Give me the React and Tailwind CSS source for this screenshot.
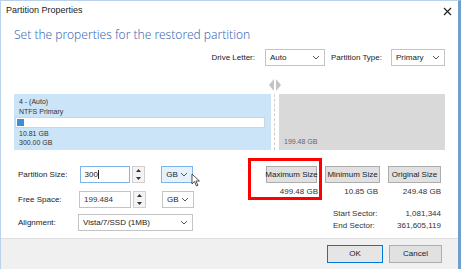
import React from 'react';

const font = { fontFamily: '"Liberation Sans", Arial, sans-serif' };

const Chevron = () => (
    <svg width="8" height="5" viewBox="0 0 8 5" className="shrink-0">
        <polyline points="1,1 4,4 7,1" fill="none" stroke="#555" strokeWidth="1" />
    </svg>
);

const Select = ({ value, className = '', focused = false }) => (
    <div
        className={`flex items-center justify-between border pl-[4px] pr-[4px] h-[17px] text-[8px] text-[#222] whitespace-nowrap ${
            focused ? 'bg-[#e5f1fb] border-[#7eb4ea]' : 'bg-white border-[#c4c4c4]'
        } ${className}`}
    >
        <span>{value}</span>
        <Chevron />
    </div>
);

const Spinner = () => (
    <div className="flex flex-col justify-center gap-[1px] w-[13px] h-[17px] ml-[2px] border border-[#d0d0d0] bg-[#f4f4f4]">
        <svg width="11" height="7" viewBox="0 0 11 7">
            <polygon points="3,5 8,5 5.5,2" fill="#333" />
        </svg>
        <svg width="11" height="7" viewBox="0 0 11 7">
            <polygon points="3,2 8,2 5.5,5" fill="#333" />
        </svg>
    </div>
);

const Btn = ({ children, className = '' }) => (
    <div className={`flex items-center justify-center border whitespace-nowrap text-[8px] text-[#222] ${className}`}>
        {children}
    </div>
);

export default function App() {
    return (
        <div style={font} className="w-[461px] h-[269px] bg-white flex flex-col border-l border-t border-[#b9d1ea] border-r-[3px] border-r-[#6f9fd0] overflow-hidden relative">
            {/* title bar */}
            <div className="h-[20px] flex items-center justify-between pl-[5px] pr-[6px] text-[9px] text-[#222]">
                <span>Partition Properties</span>
                <svg width="9" height="9" viewBox="0 0 9 9">
                    <path d="M1 1 L8 8 M8 1 L1 8" stroke="#222" strokeWidth="1.2" />
                </svg>
            </div>

            <div
                style={{ fontFamily: '"Noto Sans", "Open Sans", sans-serif' }}
                className="pl-[13px] pt-[6px] h-[22px] text-[12px] leading-[16px] font-light text-[#3e6db5]"
            >
                Set the properties for the restored partition
            </div>

            {/* drive letter row */}
            <div className="flex items-center justify-end pr-[13px] mt-[6px] h-[17px] text-[8px] text-[#222]">
                <span>Drive Letter:</span>
                <Select value="Auto" className="w-[60px] ml-[10px]" />
                <span className="ml-[6px]">Partition Type:</span>
                <Select value="Primary" className="w-[54px] ml-[9px]" />
            </div>

            {/* partition map */}
            <div className="flex mt-[13px] ml-[13px] h-[71px] items-end">
                <div className="w-[257px] h-[56px] bg-[#cce4f7] flex flex-col pl-[5px] pr-[6px] pt-[3px] text-[7px] text-[#333] leading-[10px]">
                    <span>4 - (Auto)</span>
                    <span>NTFS Primary</span>
                    <div className="h-[11px] bg-white border border-[#c6d6e6] -ml-[4px] flex items-stretch p-[1px]">
                        <div className="w-[7px] bg-[#3b8ed8]" />
                    </div>
                    <span className="mt-[1px] leading-[9px]">10.81 GB</span>
                    <span className="leading-[9px]">300.00 GB</span>
                </div>
                <div className="w-[8px] h-[71px] flex flex-col items-center">
                    <svg width="14" height="12" viewBox="0 0 14 12" className="-mx-[3px]">
                        <polygon points="6,0 6,12 1,6" fill="#c4c4c4" />
                        <polygon points="8,0 8,12 13,6" fill="#c4c4c4" />
                    </svg>
                    <div className="flex-1 w-[2px] border-l border-dashed border-[#cfcfcf] mt-[3px]" />
                </div>
                <div className="w-[166px] h-[56px] bg-[#d9d9d9] flex items-end pl-[5px] pb-[3px] text-[7px] text-[#666]">
                    199.48 GB
                </div>
            </div>

            {/* controls */}
            <div className="flex mt-[16px] h-[66px]">
                <div className="w-[200px] pl-[17px] flex flex-col text-[8px] text-[#222]">
                    <div className="flex items-center h-[17px]">
                        <span className="w-[62px]">Partition Size:</span>
                        <div className="w-[51px] h-[17px] border border-[#7eb4ea] bg-white flex items-center pl-[4px]">
                            300<span className="w-[1px] h-[9px] bg-[#222]" />
                        </div>
                        <Spinner />
                        <Select value="GB" focused className="w-[32px] ml-[16px]" />
                        <svg width="10" height="14" viewBox="0 0 10 14" className="-ml-[2px] mt-[10px]">
                            <path d="M1 1 L1 11 L3.5 8.5 L5.5 13 L7 12.3 L5 8 L8.5 8 Z" fill="white" stroke="#222" strokeWidth="0.8" />
                        </svg>
                    </div>
                    <div className="flex items-center h-[17px] mt-[8px]">
                        <span className="w-[61px]">Free Space:</span>
                        <div className="w-[52px] h-[17px] border border-[#c4c4c4] bg-white flex items-center pl-[4px] text-[#333]">
                            199.484
                        </div>
                        <Spinner />
                        <Select value="GB" className="w-[32px] ml-[16px]" />
                    </div>
                    <div className="flex items-center h-[17px] mt-[6px]">
                        <span className="w-[60px]">Alignment:</span>
                        <Select value="Vista/7/SSD (1MB)" className="w-[115px]" />
                    </div>
                </div>

                <div className="flex-1 flex flex-col pl-[63px] pr-[17px] text-[8px] text-[#333]">
                    <div className="flex gap-[8px]">
                        <div className="flex flex-col items-end w-[53px]">
                            <Btn className="w-[51px] h-[17px] border-[#adadad] bg-[#e1e1e1]">Maximum Size</Btn>
                            <span className="mt-[3px] -mr-[1px]">499.48 GB</span>
                        </div>
                        <div className="flex flex-col items-end w-[55px]">
                            <Btn className="w-[55px] h-[17px] border-[#adadad] bg-[#e1e1e1]">Minimum Size</Btn>
                            <span className="mt-[3px] mr-[2px]">10.85 GB</span>
                        </div>
                        <div className="flex flex-col items-end w-[53px]">
                            <Btn className="w-[53px] h-[17px] border-[#adadad] bg-[#e1e1e1]">Original Size</Btn>
                            <span className="mt-[3px]">249.48 GB</span>
                        </div>
                    </div>
                    <div className="flex flex-col mt-[10px] ml-[69px] leading-[12px]">
                        <div className="flex justify-between">
                            <span>Start Sector:</span>
                            <span>1,081,344</span>
                        </div>
                        <div className="flex justify-between">
                            <span>End Sector:</span>
                            <span>361,605,119</span>
                        </div>
                    </div>
                </div>
            </div>

            {/* highlight */}
            <div className="absolute left-[247px] top-[157px] w-[74px] h-[42px] border-[3px] border-[#ff0000]" />

            {/* footer */}
            <div className="mt-auto h-[31px] bg-[#f0f0f0] border-t border-[#dfdfdf] flex items-center justify-end gap-[6px] pr-[16px]">
                <Btn className="w-[56px] h-[18px] border-[#0078d7] bg-[#e5e5e5]">OK</Btn>
                <Btn className="w-[53px] h-[18px] border-[#adadad] bg-[#e1e1e1]">Cancel</Btn>
            </div>
        </div>
    );
}
